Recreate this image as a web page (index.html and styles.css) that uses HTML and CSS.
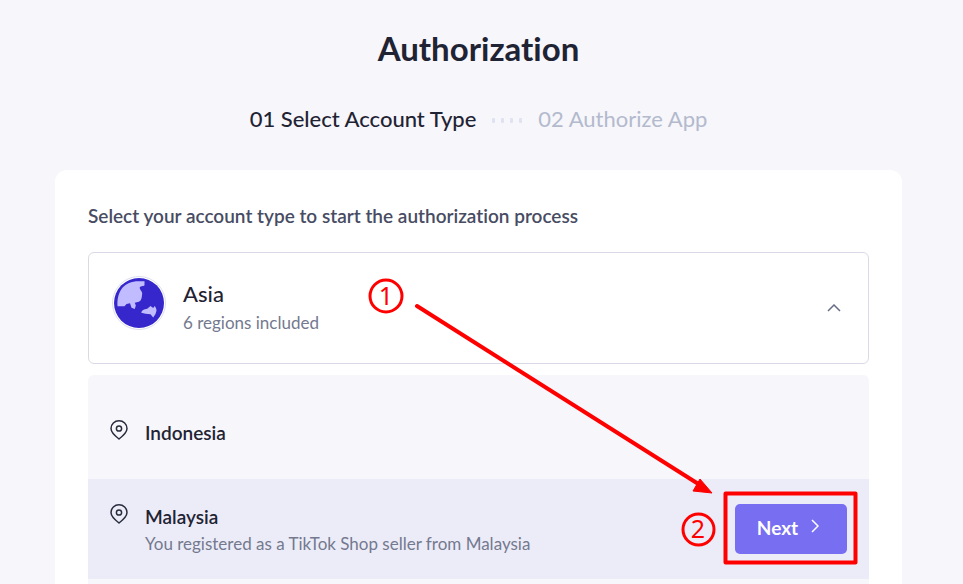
FILE: index.html
```html
<!DOCTYPE html>
<html lang="en">
<head>
    <meta charset="UTF-8">
    <meta name="viewport" content="width=device-width, initial-scale=1.0">
    <title>Authorization</title>
    <link rel="stylesheet" href="styles.css">
</head>
<body>
    <main class="page">
        <h1 class="page-title">Authorization</h1>

        <!-- Steps -->
        <div class="steps">
            <span class="step active">01 Select Account Type</span>
            <span class="step-dots"><i></i><i></i><i></i><i></i></span>
            <span class="step">02 Authorize App</span>
        </div>

        <section class="card">
            <h2 class="card-title">Select your account type to start the authorization process</h2>

            <!-- Region group -->
            <button class="region-group" type="button" aria-expanded="true">
                <svg class="globe" viewBox="0 0 54 54" aria-hidden="true">
                    <circle cx="27" cy="27" r="26.5" fill="#fff" stroke="#dcdff0"/>
                    <circle cx="27" cy="27" r="25" fill="#3627cc"/>
                    <path fill="#c0bcff" d="M5.500 30.200H12.500L14.500 28l3.500-.7 1.500 4.400 3.300 1.200 1-3.400-1-2.800 4-1c2.500-1 3-3 3.400-8.400 0-2-3-4-2.400-6 1-2 4.700-.5 4.700-2.600V5.200H24C17 6 12.500 9 9.500 13 7 17 5 22 5.500 30.200z"/>
                    <path fill="#c0bcff" d="M29.300 36.800c.2-2.300 3-3.800 5.900-4.100l3.300-2.700 2.700 2 1.600-2c1 1.500 1.700 3 1.700 4.700l-1 3.300-2.300 3.600-2.700-3.300-5-.6z"/>
                </svg>
                <span class="region-text">
                    <span class="region-name">Asia</span>
                    <span class="region-note">6 regions included</span>
                </span>
                <svg class="chevron" viewBox="0 0 14 8" aria-hidden="true">
                    <path d="M1 7l6-6 6 6"/>
                </svg>
            </button>

            <!-- Countries -->
            <ul class="countries">
                <li class="country">
                    <svg class="pin" viewBox="0 0 18 20" aria-hidden="true">
                        <path d="M9 19C4.500 15.500 1 12 1 8.500a8 7.700 0 0 1 16 0C17 12 13.500 15.500 9 19z"/>
                        <circle cx="9" cy="8.500" r="2.600"/>
                    </svg>
                    <div class="country-text">
                        <h3 class="country-name">Indonesia</h3>
                    </div>
                </li>
                <li class="country selected">
                    <svg class="pin" viewBox="0 0 18 20" aria-hidden="true">
                        <path d="M9 19C4.500 15.500 1 12 1 8.500a8 7.700 0 0 1 16 0C17 12 13.500 15.500 9 19z"/>
                        <circle cx="9" cy="8.500" r="2.600"/>
                    </svg>
                    <div class="country-text">
                        <h3 class="country-name">Malaysia</h3>
                        <p class="country-note">You registered as a TikTok Shop seller from Malaysia</p>
                    </div>
                    <button class="next-btn" type="button">
                        Next
                        <svg class="next-icon" viewBox="0 0 8 14" aria-hidden="true">
                            <path d="M1 1l6 6-6 6"/>
                        </svg>
                    </button>
                </li>
            </ul>
        </section>

        <!-- Guide marks -->
        <svg class="marks" width="963" height="584" aria-hidden="true">
            <circle cx="386" cy="296" r="16"/>
            <text x="386" y="305">1</text>
            <path class="arrow-line" d="M417 306L700 485"/>
            <path class="arrow-head" d="M712 493l-19-2 7-12z"/>
            <circle cx="698.500" cy="529.500" r="15.500"/>
            <text x="698" y="538">2</text>
            <rect x="725.500" y="493.500" width="130" height="69"/>
        </svg>
    </main>
</body>
</html>
```
FILE: styles.css
```css
* {
    margin: 0;
    padding: 0;
    box-sizing: border-box;
}

body {
    font-family: Lato, "Open Sans", sans-serif;
    font-variant-ligatures: none;
    background: #f6f6fb;
    color: #1f2333;
}

.page {
    position: relative;
    display: flex;
    flex-direction: column;
    height: 100vh;
    padding: 26px 61px 0 55px;
    overflow: hidden;
}

.page-title {
    font-size: 33px;
    line-height: 44px;
    font-weight: 700;
    text-align: center;
}

/* Steps */
.steps {
    display: flex;
    justify-content: center;
    align-items: center;
    gap: 16px;
    margin: 33px 0 35px;
    font-size: 22px;
    line-height: 32px;
    white-space: nowrap;
}

.step {
    color: #b4bacd;
}

.step.active {
    color: #1f2333;
    font-weight: 500;
}

.step-dots {
    display: flex;
    gap: 6px;
    padding-top: 2px;
}

.step-dots i {
    width: 3px;
    height: 5px;
    border-radius: 1px;
    background: #dfe2f0;
}

/* Card */
.card {
    flex: 1;
    display: flex;
    flex-direction: column;
    padding: 32px 33px 0;
    border-radius: 12px 12px 0 0;
    background: #fff;
}

.card-title {
    font-size: 19px;
    line-height: 28px;
    font-weight: 600;
    color: #474c63;
}

.region-group {
    display: flex;
    align-items: center;
    flex-shrink: 0;
    width: 100%;
    height: 112px;
    margin-top: 22px;
    padding: 0 27px 0 23px;
    border: 1px solid #d9dae5;
    border-radius: 6px;
    background: #fff;
    color: inherit;
    font-family: inherit;
    text-align: left;
    cursor: pointer;
}

.globe {
    width: 54px;
    height: 54px;
    margin-bottom: 10px;
}

.region-text {
    display: flex;
    flex-direction: column;
    flex: 1;
    margin-left: 17px;
}

.region-name {
    font-size: 22px;
    line-height: 30px;
    font-weight: 500;
}

.region-note,
.country-note {
    font-size: 17px;
    line-height: 28px;
    color: #74798f;
}

.chevron {
    width: 14px;
    height: 8px;
    fill: none;
    stroke: #686d87;
    stroke-width: 1.5px;
}

/* Countries */
.countries {
    flex: 1;
    margin-top: 11px;
    border-radius: 6px 6px 0 0;
    background: #f6f6fb;
    list-style: none;
    overflow: hidden;
}

.country {
    display: flex;
    align-items: flex-start;
    height: 104px;
    padding: 45px 22px 0;
}

.country.selected {
    height: 100px;
    padding-top: 25px;
    background: #ececf8;
}

.pin {
    width: 18px;
    height: 20px;
    fill: none;
    stroke: #272b3b;
    stroke-width: 1.5px;
}

.country-text {
    flex: 1;
    margin-left: 17px;
}

.country-name {
    font-size: 19px;
    line-height: 26px;
    font-weight: 600;
}

.next-btn {
    display: flex;
    align-items: center;
    justify-content: center;
    gap: 13px;
    width: 112px;
    height: 50px;
    padding: 0 6px 3px 0;
    border: none;
    border-radius: 5px;
    background: #776ef2;
    color: #fff;
    font-family: inherit;
    font-size: 19px;
    font-weight: 700;
    cursor: pointer;
}

.next-btn:hover {
    background: #685fe3;
}

.next-icon {
    width: 8px;
    height: 14px;
    margin-bottom: 3px;
    fill: none;
    stroke: #fff;
    stroke-width: 1.5px;
}

/* Guide marks */
.marks {
    position: absolute;
    top: 0;
    left: 0;
    fill: none;
    stroke: #fe0000;
    stroke-width: 3px;
    pointer-events: none;
}

.marks rect {
    stroke-width: 4px;
    stroke-linejoin: round;
}

.marks text {
    font-family: "Noto Sans", sans-serif;
    font-size: 25px;
    text-anchor: middle;
    fill: #fe0000;
    stroke: none;
}

.marks .arrow-line {
    stroke-width: 4px;
    stroke-linecap: round;
}

.marks .arrow-head {
    fill: #fe0000;
    stroke-width: 1px;
}
```
